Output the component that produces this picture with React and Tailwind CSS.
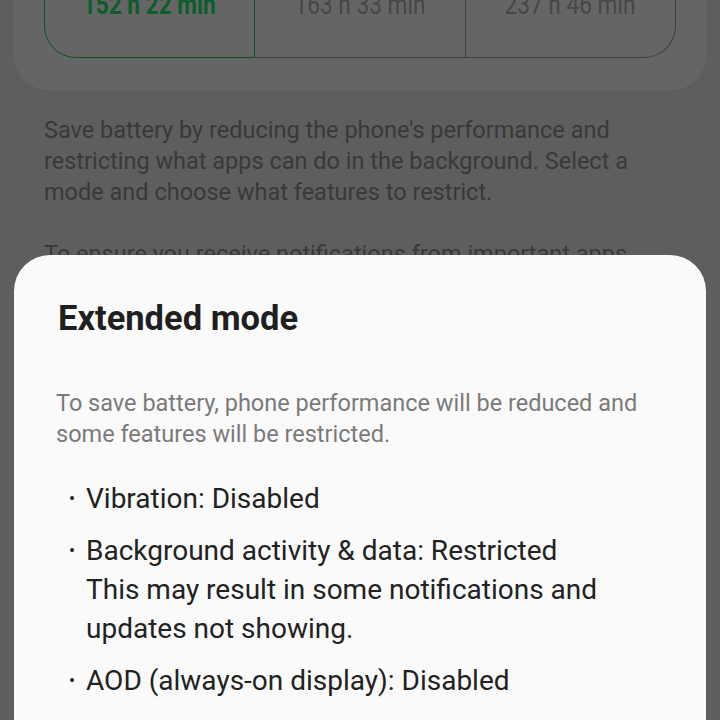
import React from 'react';

const modes = [
  { label: '152 h 22 min', active: true },
  { label: '163 h 33 min' },
  { label: '237 h 46 min' },
];

const restrictions = [
  { title: 'Vibration: Disabled' },
  {
    title: 'Background activity & data: Restricted',
    note: 'This may result in some notifications and updates not showing.',
  },
  { title: 'AOD (always-on display): Disabled' },
];

const ModeSelector = () => (
  <div className="mx-[14px] -mt-[48px] rounded-b-[34px] bg-[#656565] px-[30px] pt-0 pb-[32px]">
    <div className="flex h-[106px]">
      {modes.map((m, i) => (
        <div
          key={m.label}
          className={`flex-1 flex items-center justify-center ${
            m.active
              ? 'border-[1.5px] border-[#0a5226] rounded-l-[32px]'
              : `border-y-[1.5px] border-r-[1.5px] border-[#3f3f3f] ${i === 2 ? 'rounded-r-[32px]' : ''}`
          }`}
        >
          <span
            className={`inline-block scale-x-[0.84] text-[27px] ${
              m.active ? 'font-bold text-[#0b5e2c]' : 'text-[#474747]'
            }`}
          >
            {m.label}
          </span>
        </div>
      ))}
    </div>
  </div>
);

export default function App() {
  return (
    <div
      className="relative w-[720px] h-[720px] overflow-hidden bg-[#5e5e5e]"
      style={{ fontFamily: 'Roboto, "Noto Sans", sans-serif' }}
    >
      <ModeSelector />

      <div className="px-[44px] mt-[25px] text-[23.5px] leading-[31px] text-[#393939]">
        <p>
          Save battery by reducing the phone's performance and restricting what apps can do in
          the background. Select a mode and choose what features to restrict.
        </p>
        <p className="mt-[31px]">
          To ensure you receive notifications from important apps, add them to the never
          sleeping apps list.
        </p>
      </div>

      {/* Bottom sheet */}
      <div className="absolute left-[14px] right-[14px] top-[255px] h-[520px] rounded-t-[36px] bg-[#fafafa] px-[42px] pt-[43px]">
        <h2 className="pl-[2px] text-[34.5px] leading-[40px] font-bold text-[#1f1f1f]">Extended mode</h2>
        <p className="mt-[50px] text-[23.5px] leading-[31px] text-[#7a7a7a]">
          To save battery, phone performance will be reduced and some features will be
          restricted.
        </p>
        <ul className="mt-[29px] flex flex-col gap-[13px] text-[28px] leading-[39px] text-[#222]">
          {restrictions.map((r) => (
            <li key={r.title} className="flex">
              <span className="w-[30px] shrink-0 pl-[13px] text-[18px]">•</span>
              <div>
                <div>{r.title}</div>
                {r.note && <div className="pr-[20px]">{r.note}</div>}
              </div>
            </li>
          ))}
        </ul>
      </div>
    </div>
  );
}
